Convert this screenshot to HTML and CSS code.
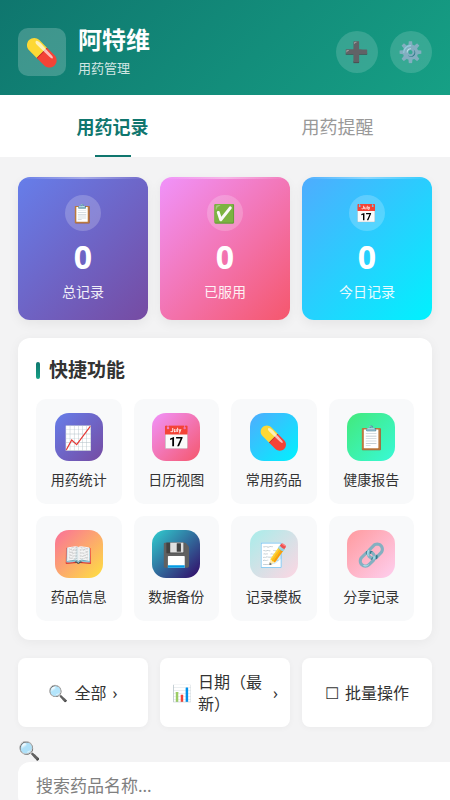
FILE: index.html
```html
<!DOCTYPE html>
<html lang="zh-CN">
<head>
    <meta charset="UTF-8">
    <meta name="viewport" content="width=device-width, initial-scale=1.0">
    <title>阿特维 用药管理</title>
    <link rel="stylesheet" href="styles.css">
</head>
<body>
    <header class="header">
        <div class="logo">💊</div>
        <div class="brand">
            <h1 class="brand-name">阿特维</h1>
            <p class="brand-sub">用药管理</p>
        </div>
        <button class="round-btn" type="button" aria-label="添加">➕</button>
        <button class="round-btn" type="button" aria-label="设置">⚙️</button>
    </header>

    <nav class="tabs">
        <button class="tab active" type="button">用药记录</button>
        <button class="tab" type="button">用药提醒</button>
    </nav>

    <main class="content">
        <section class="stats">
            <div class="stat purple">
                <div class="stat-icon">📋</div>
                <div class="stat-num">0</div>
                <div class="stat-label">总记录</div>
            </div>
            <div class="stat pink">
                <div class="stat-icon">✅</div>
                <div class="stat-num">0</div>
                <div class="stat-label">已服用</div>
            </div>
            <div class="stat blue">
                <div class="stat-icon">📅</div>
                <div class="stat-num">0</div>
                <div class="stat-label">今日记录</div>
            </div>
        </section>

        <section class="card">
            <h2 class="card-title">快捷功能</h2>
            <div class="grid">
                <button class="item" type="button"><span class="item-icon purple">📈</span>用药统计</button>
                <button class="item" type="button"><span class="item-icon pink">📅</span>日历视图</button>
                <button class="item" type="button"><span class="item-icon blue">💊</span>常用药品</button>
                <button class="item" type="button"><span class="item-icon green">📋</span>健康报告</button>
                <button class="item" type="button"><span class="item-icon orange">📖</span>药品信息</button>
                <button class="item" type="button"><span class="item-icon navy">💾</span>数据备份</button>
                <button class="item" type="button"><span class="item-icon mint">📝</span>记录模板</button>
                <button class="item" type="button"><span class="item-icon rose">🔗</span>分享记录</button>
            </div>
        </section>

        <div class="filters">
            <button class="filter" type="button"><span>🔍</span><span>全部</span><span>›</span></button>
            <button class="filter" type="button"><span>📊</span><span>日期（最新）</span><span>›</span></button>
            <button class="filter" type="button"><span>☐</span><span>批量操作</span></button>
        </div>

        <div class="search">
            <label class="search-icon" for="keyword">🔍</label>
            <input class="search-input" id="keyword" type="text" placeholder="搜索药品名称...">
        </div>
    </main>
</body>
</html>
```
FILE: styles.css
```css
*{
    margin: 0;
    padding: 0;
    box-sizing: border-box;
}
body{
    height: 100vh;
    overflow: hidden;
    background-color: #f3f3f4;
    color: #333;
    font-family: "Noto Sans", "Noto Sans CJK SC", "Noto Color Emoji", sans-serif;
}
button{
    border: none;
    background: none;
    font-family: inherit;
    color: inherit;
    cursor: pointer;
}

/* header */
.header{
    display: flex;
    align-items: center;
    gap: 12px;
    padding: 25px 18px 17px;
    background: linear-gradient(135deg, #0f766e, #16a085);
    color: #fff;
}
.logo{
    display: flex;
    align-items: center;
    justify-content: center;
    width: 48px;
    height: 48px;
    border-radius: 10px;
    background-color: rgba(255,255,255,.2);
    font-size: 27px;
}
.brand{
    flex: 1;
}
.brand-name{
    font-size: 24px;
    line-height: 30px;
}
.brand-sub{
    margin-top: 3px;
    font-size: 13px;
    line-height: 20px;
    opacity: .8;
}
.round-btn{
    width: 42px;
    height: 42px;
    border-radius: 50%;
    background-color: rgba(255,255,255,.15);
    font-size: 20px;
}

/* tabs */
.tabs{
    display: flex;
    background-color: #fff;
}
.tab{
    flex: 1;
    position: relative;
    height: 62px;
    font-size: 18px;
    color: #999;
}
.tab.active{
    color: #0f766e;
    font-weight: bold;
}
.tab.active::after{
    content: "";
    position: absolute;
    left: 50%;
    bottom: 0;
    width: 36px;
    height: 2px;
    margin-left: -18px;
    background-color: #0f766e;
}

.content{
    padding: 20px 18px;
}

/* gradients */
.purple{ background: linear-gradient(135deg, #667eea, #764ba2); }
.pink{ background: linear-gradient(135deg, #f093fb, #f5576c); }
.blue{ background: linear-gradient(135deg, #4facfe, #00f2fe); }
.green{ background: linear-gradient(135deg, #43e97b, #38f9d7); }
.orange{ background: linear-gradient(135deg, #fa709a, #fee140); }
.navy{ background: linear-gradient(135deg, #30cfd0, #330867); }
.mint{ background: linear-gradient(135deg, #a8edea, #fed6e3); }
.rose{ background: linear-gradient(135deg, #ff9a9e, #fecfef); }

/* stats */
.stats{
    display: grid;
    grid-template-columns: repeat(3, 1fr);
    gap: 12px;
}
.stat{
    position: relative;
    display: flex;
    flex-direction: column;
    align-items: center;
    padding: 18px 12px;
    border-radius: 12px;
    overflow: hidden;
    color: #fff;
    box-shadow: 0 4px 12px rgba(0,0,0,.06);
}
.stat::before{
    content: "";
    position: absolute;
    top: 0;
    left: 0;
    right: 0;
    height: 2px;
    background: linear-gradient(90deg, transparent, rgba(255,255,255,.4), transparent);
}
.stat-icon{
    display: flex;
    align-items: center;
    justify-content: center;
    width: 36px;
    height: 36px;
    border-radius: 50%;
    background-color: rgba(255,255,255,.2);
    font-size: 18px;
}
.stat-num{
    margin-top: 8px;
    font-size: 32px;
    line-height: 36px;
    font-weight: bold;
}
.stat-label{
    margin-top: 6px;
    font-size: 14px;
    line-height: 21px;
    opacity: .9;
}

/* quick functions */
.card{
    margin-top: 18px;
    padding: 18px 18px 19px;
    border-radius: 12px;
    background-color: #fff;
    box-shadow: 0 2px 12px rgba(0,0,0,.05);
}
.card-title{
    display: flex;
    align-items: center;
    gap: 9px;
    margin-bottom: 14px;
    font-size: 19px;
    line-height: 29px;
}
.card-title::before{
    content: "";
    width: 4px;
    height: 17px;
    border-radius: 2px;
    background: linear-gradient(#0f766e, #16a085);
}
.grid{
    display: grid;
    grid-template-columns: repeat(4, 1fr);
    gap: 12px;
}
.item{
    display: flex;
    flex-direction: column;
    align-items: center;
    gap: 8px;
    padding: 14px 0;
    border-radius: 10px;
    background-color: #f8f9fa;
    font-size: 14px;
    line-height: 21px;
}
.item-icon{
    display: flex;
    align-items: center;
    justify-content: center;
    width: 48px;
    height: 48px;
    border-radius: 14px;
    font-size: 23px;
}

/* filters */
.filters{
    display: grid;
    grid-template-columns: repeat(3, 1fr);
    gap: 12px;
    margin-top: 18px;
}
.filter{
    display: flex;
    align-items: center;
    justify-content: center;
    gap: 6px;
    padding: 12px;
    border-radius: 8px;
    background-color: #fff;
    box-shadow: 0 1px 6px rgba(0,0,0,.04);
    font-size: 16px;
    line-height: 22px;
    min-height: 69px;
    text-align: left;
}

/* search */
.search{
    margin-top: 12px;
}
.search-icon{
    display: block;
    font-size: 18px;
    line-height: 23px;
}
.search-input{
    box-sizing: content-box;
    width: 100%;
    height: 46px;
    padding: 0 18px;
    border: none;
    border-radius: 12px;
    background-color: #fff;
    font-family: inherit;
    font-size: 17px;
}
.search-input::placeholder{
    color: #808080;
}
```
